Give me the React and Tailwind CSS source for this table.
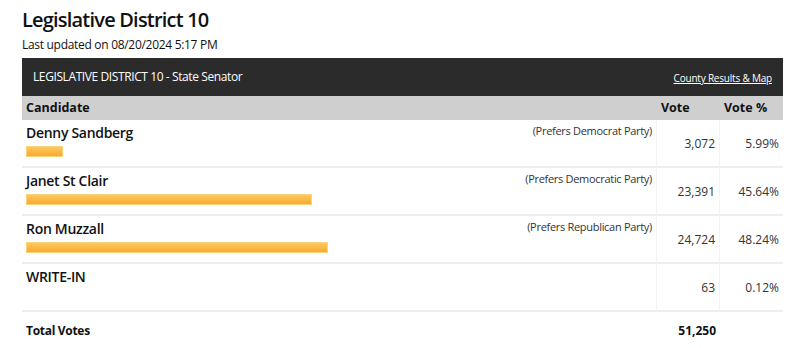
import React from 'react';

const ROWS = [
  { name: 'Denny Sandberg', party: '(Prefers Democrat Party)', votes: '3,072', pct: 5.99 },
  { name: 'Janet St Clair', party: '(Prefers Democratic Party)', votes: '23,391', pct: 45.64 },
  { name: 'Ron Muzzall', party: '(Prefers Republican Party)', votes: '24,724', pct: 48.24 },
  { name: 'WRITE-IN', party: '', votes: '63', pct: 0.12, noBar: true },
];

function Row({ row }) {
  return (
    <div className="grid grid-cols-[1fr_63px_63px] h-[48px] border-b-2 border-[#eeeeee]">
      <div className="px-1 pt-[2px] border-r border-[#f3f3f3]">
        <div className="flex items-start justify-between">
          <span className="text-[14px] font-semibold text-[#111] tracking-[-0.3px]">{row.name}</span>
          <span className="text-[11px] text-[#333] pt-[1px] tracking-[-0.3px]">{row.party}</span>
        </div>
        {!row.noBar && (
          <div className="mt-[3px] h-[11px]">
            <div
              className="h-full bg-gradient-to-b from-[#fcc95e] to-[#f6ab2a] border border-[#fbd17a]"
              style={{ width: `${row.pct}%` }}
            />
          </div>
        )}
      </div>
      <div className="flex items-center justify-end px-1 pt-[2px] text-[12px] text-[#333] border-r border-[#f3f3f3]">
        {row.votes}
      </div>
      <div className="flex items-center justify-end px-1 pt-[2px] text-[12px] text-[#333]">
        {row.pct.toFixed(2)}%
      </div>
    </div>
  );
}

export default function App() {
  return (
    <div className="bg-white w-[801px] h-[348px] overflow-hidden font-['Open_Sans',sans-serif] text-[#111]">
      <div className="ml-[22px] w-[761px]">
        <h1 className="pt-[7px] text-[20px] leading-[26px] font-semibold tracking-[-0.8px]">Legislative District 10</h1>
        <p className="mt-[4px] text-[12px] leading-[16px] tracking-[-0.3px]">Last updated on 08/20/2024 5:17 PM</p>

        <div className="mt-[5px] h-[38px] bg-[#2b2b2b] flex items-center justify-between pl-[11px] pr-[11px]">
          <span className="text-white text-[12px] tracking-[-0.4px]">LEGISLATIVE DISTRICT 10 - State Senator</span>
          <a href="#" className="text-white text-[10px] underline pt-[2px] tracking-[-0.2px]">County Results &amp; Map</a>
        </div>

        <div className="grid grid-cols-[1fr_63px_63px] h-[24px] bg-[#cfcfcf] items-center text-[12.5px] font-bold">
          <span className="px-1">Candidate</span>
          <span className="px-1">Vote</span>
          <span className="px-1">Vote %</span>
        </div>

        {ROWS.map(r => <Row key={r.name} row={r} />)}

        <div className="grid grid-cols-[1fr_63px_63px] h-[37px] items-center text-[12px] font-bold">
          <span className="px-1 tracking-[-0.3px]">Total Votes</span>
          <span className="px-1 text-right">51,250</span>
          <span />
        </div>
      </div>
    </div>
  );
}
